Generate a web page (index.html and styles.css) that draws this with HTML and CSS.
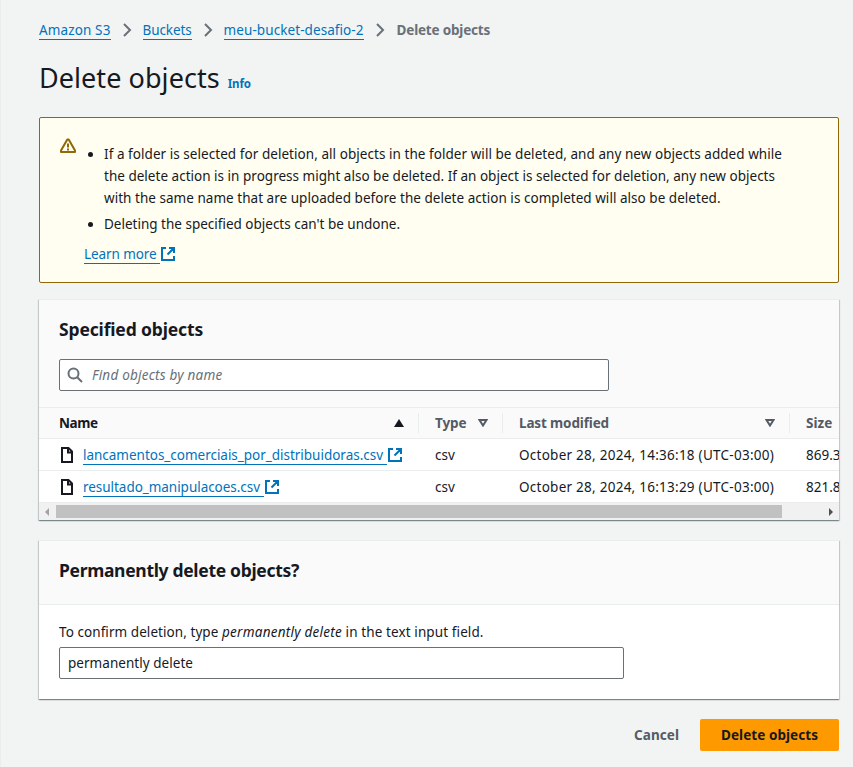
FILE: index.html
```
<!DOCTYPE html>
<html lang="en">
<head>
<meta charset="utf-8">
<title>Delete objects</title>
<link rel="stylesheet" href="styles.css">
</head>
<body>
<svg class="defs" aria-hidden="true">
  <symbol id="chevron" viewBox="0 0 16 16"><path d="M5 2l6 6-6 6"/></symbol>
  <symbol id="external" viewBox="0 0 16 16"><path d="M6 2H2v12h12v-4M9 2h5v5M14 2L7.500 8.500"/></symbol>
  <symbol id="file" viewBox="0 0 16 16"><path d="M3 1h6.500L13 4.500V15H3zM9 1v4.500h4"/></symbol>
</svg>
<main class="page">
  <nav class="crumbs">
    <a class="link t-s3" href="#">Amazon S3</a>
    <svg class="icon chevron"><use href="#chevron"/></svg>
    <a class="link t-buckets" href="#">Buckets</a>
    <svg class="icon chevron"><use href="#chevron"/></svg>
    <a class="link t-bucket" href="#">meu-bucket-desafio-2</a>
    <svg class="icon chevron"><use href="#chevron"/></svg>
    <span class="current">Delete objects</span>
  </nav>
  <header class="title">
    <h1>Delete objects</h1>
    <a class="info" href="#">Info</a>
  </header>

  <section class="alert">
    <svg class="icon warn" viewBox="0 0 16 16"><path d="M7.300 1.500h1.400L15 12.600v1.400H1v-1.400z"/><path d="M8 5.500v4M8 10.500v2"/></svg>
    <div class="alert-body">
      <ul>
        <li><span class="line l1">If a folder is selected for deletion, all objects in the folder will be deleted, and any new objects added while</span>
          <span class="line l2">the delete action is in progress might also be deleted. If an object is selected for deletion, any new objects</span>
          <span class="line l3">with the same name that are uploaded before the delete action is completed will also be deleted.</span></li>
        <li>Deleting the specified objects can't be undone.</li>
      </ul>
      <div class="ext"><a class="link t-learn" href="#">Learn more</a><svg class="icon external"><use href="#external"/></svg></div>
    </div>
  </section>

  <section class="card objects">
    <div class="objects-head">
      <h2>Specified objects</h2>
      <div class="field search">
        <svg class="icon" viewBox="0 0 16 16"><circle cx="6.500" cy="6.500" r="5"/><path d="M10.200 10.200l4.800 4.800"/></svg>
        <span>Find objects by name</span>
      </div>
    </div>
    <div class="row head">
      <div class="cell sorted"><span class="t-name">Name</span><svg class="sort" viewBox="0 0 10 8"><path d="M5 0l5 8H0z"/></svg></div>
      <div class="cell"><span class="t-type">Type</span><svg class="sort open" viewBox="0 0 10 8"><path d="M1.500 1h7L5 6.500z"/></svg></div>
      <div class="cell"><span class="t-mod">Last modified</span><svg class="sort open" viewBox="0 0 10 8"><path d="M1.500 1h7L5 6.500z"/></svg></div>
      <div class="cell">Size</div>
    </div>
    <div class="row">
      <div class="cell"><svg class="icon file"><use href="#file"/></svg><a class="link t-f1" href="#">lancamentos_comerciais_por_distribuidoras.csv</a><svg class="icon external"><use href="#external"/></svg></div>
      <div class="cell">csv</div>
      <div class="cell date">October 28, 2024, 14:36:18 (UTC-03:00)</div>
      <div class="cell size">869.3</div>
    </div>
    <div class="row">
      <div class="cell"><svg class="icon file"><use href="#file"/></svg><a class="link t-f2" href="#">resultado_manipulacoes.csv</a><svg class="icon external"><use href="#external"/></svg></div>
      <div class="cell">csv</div>
      <div class="cell date">October 28, 2024, 16:13:29 (UTC-03:00)</div>
      <div class="cell size">821.8</div>
    </div>
    <div class="scrollbar">
      <svg class="arrow off" viewBox="0 0 4 8"><path d="M4 0v8L0 4z"/></svg>
      <div class="thumb"></div>
      <svg class="arrow" viewBox="0 0 4 8"><path d="M0 0v8l4-4z"/></svg>
    </div>
  </section>

  <section class="card confirm">
    <h2>Permanently delete objects?</h2>
    <div class="confirm-body">
      <p>To confirm deletion, type <em>permanently delete</em> <span class="t-in">in the text input field.</span></p>
      <div class="field value">permanently delete</div>
    </div>
  </section>

  <footer class="actions">
    <button class="cancel" type="button">Cancel</button>
    <button class="primary" type="button">Delete objects</button>
  </footer>
</main>
</body>
</html>
```
FILE: styles.css
```
* { box-sizing: border-box; }

body {
  margin: 0;
  height: 767px;
  overflow: hidden;
  background: #f2f3f3;
  border-left: 1px solid #eaeded;
  color: #16191f;
  font: 13.5px/22px "Noto Sans", sans-serif;
}

h1, h2, p, ul { margin: 0; }
button { border: 0; background: none; padding: 0; font: inherit; }
.defs { position: absolute; width: 0; height: 0; }

.page { width: 800px; margin-left: 38px; }

.icon {
  flex: none;
  width: 16px;
  height: 16px;
  fill: none;
  stroke: currentColor;
  stroke-width: 2;
}

.link {
  color: #0073bb;
  text-decoration: none;
  white-space: nowrap;
  line-height: 18px;
  border-bottom: 1px solid #0073bb;
}

.crumbs { display: flex; align-items: center; height: 40px; padding-top: 20px; }
.chevron { margin: 0 8px; color: #687078; }
.current { margin-left: 1px; color: #687078; font-weight: 700; letter-spacing: -0.19px; }
.t-s3 { letter-spacing: 0.131px; }
.t-buckets { letter-spacing: -0.1px; }
.t-bucket { letter-spacing: 0.08px; }

.title { display: flex; align-items: baseline; gap: 8px; height: 77px; padding-top: 20px; }
h1 { font-size: 27px; line-height: 36px; font-weight: 400; letter-spacing: 0.06px; }
.info { color: #0073bb; font-size: 11.5px; font-weight: 700; text-decoration: none; letter-spacing: -0.147px; }

.alert {
  display: flex;
  height: 166px;
  padding: 19px 20px;
  gap: 8px;
  background: #fffef0;
  border: 1px solid #906806;
  border-radius: 2px;
}
.warn { margin-top: 1px; color: #906806; stroke-linejoin: round; }
.alert ul { padding: 6px 0 0 20px; }
.alert li { margin-bottom: 4px; }
.line { display: block; white-space: nowrap; }
.l1 { letter-spacing: 0.052px; }
.l2 { letter-spacing: 0.017px; }
.l3 { letter-spacing: 0.033px; }

.ext { display: flex; align-items: center; height: 22px; margin-top: 8px; }
.external { color: #0073bb; }
.t-learn { letter-spacing: -0.09px; padding-right: 3px; }

.card {
  background: #fff;
  border-top: 1px solid #eaeded;
  box-shadow: 0 1px 1px rgba(0, 28, 36, 0.3), 1px 1px 1px rgba(0, 28, 36, 0.15), -1px 1px 1px rgba(0, 28, 36, 0.15);
}
h2 { font-size: 17.5px; line-height: 22px; font-weight: 700; letter-spacing: -0.149px; }

.objects { height: 221px; margin-top: 16px; overflow: hidden; }
.objects-head { height: 108px; padding: 18px 20px 0; background: #fafafa; border-bottom: 1px solid #eaeded; }
.field {
  display: flex;
  align-items: center;
  height: 32px;
  background: #fff;
  border: 1px solid #687078;
  border-radius: 2px;
  padding: 0 8px;
}
.search { width: 550px; margin-top: 19px; padding-left: 7px; gap: 9px; color: #687078; font-style: italic; letter-spacing: 0.223px; }

.row {
  display: grid;
  grid-template-columns: 380px 84px 287px 49px;
  align-items: center;
  height: 32px;
  border-bottom: 1px solid #eaeded;
}
.cell { display: flex; align-items: center; padding-left: 16px; white-space: nowrap; }
.cell:first-child { padding-left: 20px; }
.head { height: 31px; background: #fafafa; color: #545b64; font-weight: 700; }
.head .cell { height: 20px; justify-content: space-between; padding-right: 14px; border-right: 1px solid #eaeded; }
.head .cell:last-child { padding-right: 0; border-right: 0; }
.sorted { color: #16191f; }
.sort { width: 10px; height: 8px; fill: currentColor; }
.open { fill: none; stroke: currentColor; stroke-width: 2; }
.t-name { letter-spacing: -0.446px; }
.t-type { letter-spacing: -0.08px; }
.t-mod { letter-spacing: -0.137px; }
.file { margin-right: 8px; }
.cell .link { padding-right: 4px; margin-top: 2px; }
.t-f1 { letter-spacing: -0.018px; }
.t-f2 { letter-spacing: -0.038px; }
.date { letter-spacing: 0.255px; }
.size { overflow: hidden; }

.scrollbar { display: flex; align-items: center; height: 17px; padding: 0 6px; background: #f1f1f1; }
.thumb { width: 726px; height: 13px; margin: 0 auto 0 7px; background: #c1c1c1; }
.arrow { width: 4px; height: 8px; fill: #505050; }
.off { fill: #a3a3a3; }

.confirm { height: 159px; margin-top: 20px; }
.confirm h2 { height: 64px; padding: 18px 20px 0; letter-spacing: -0.312px; background: #fafafa; border-bottom: 1px solid #eaeded; }
.confirm-body { padding: 16px 20px 0; }
.confirm p { letter-spacing: 0.067px; white-space: nowrap; }
.confirm em { letter-spacing: 0.247px; }
.t-in { letter-spacing: 0.108px; }
.value { width: 565px; margin-top: 4px; letter-spacing: 0.042px; }

.actions { display: flex; justify-content: flex-end; align-items: center; gap: 21px; margin-top: 20px; font-weight: 700; }
.cancel { color: #545b64; letter-spacing: 0.071px; }
.primary { width: 139px; height: 32px; background: #ff9900; color: #16191f; border-radius: 2px; letter-spacing: 0.064px; }
```
